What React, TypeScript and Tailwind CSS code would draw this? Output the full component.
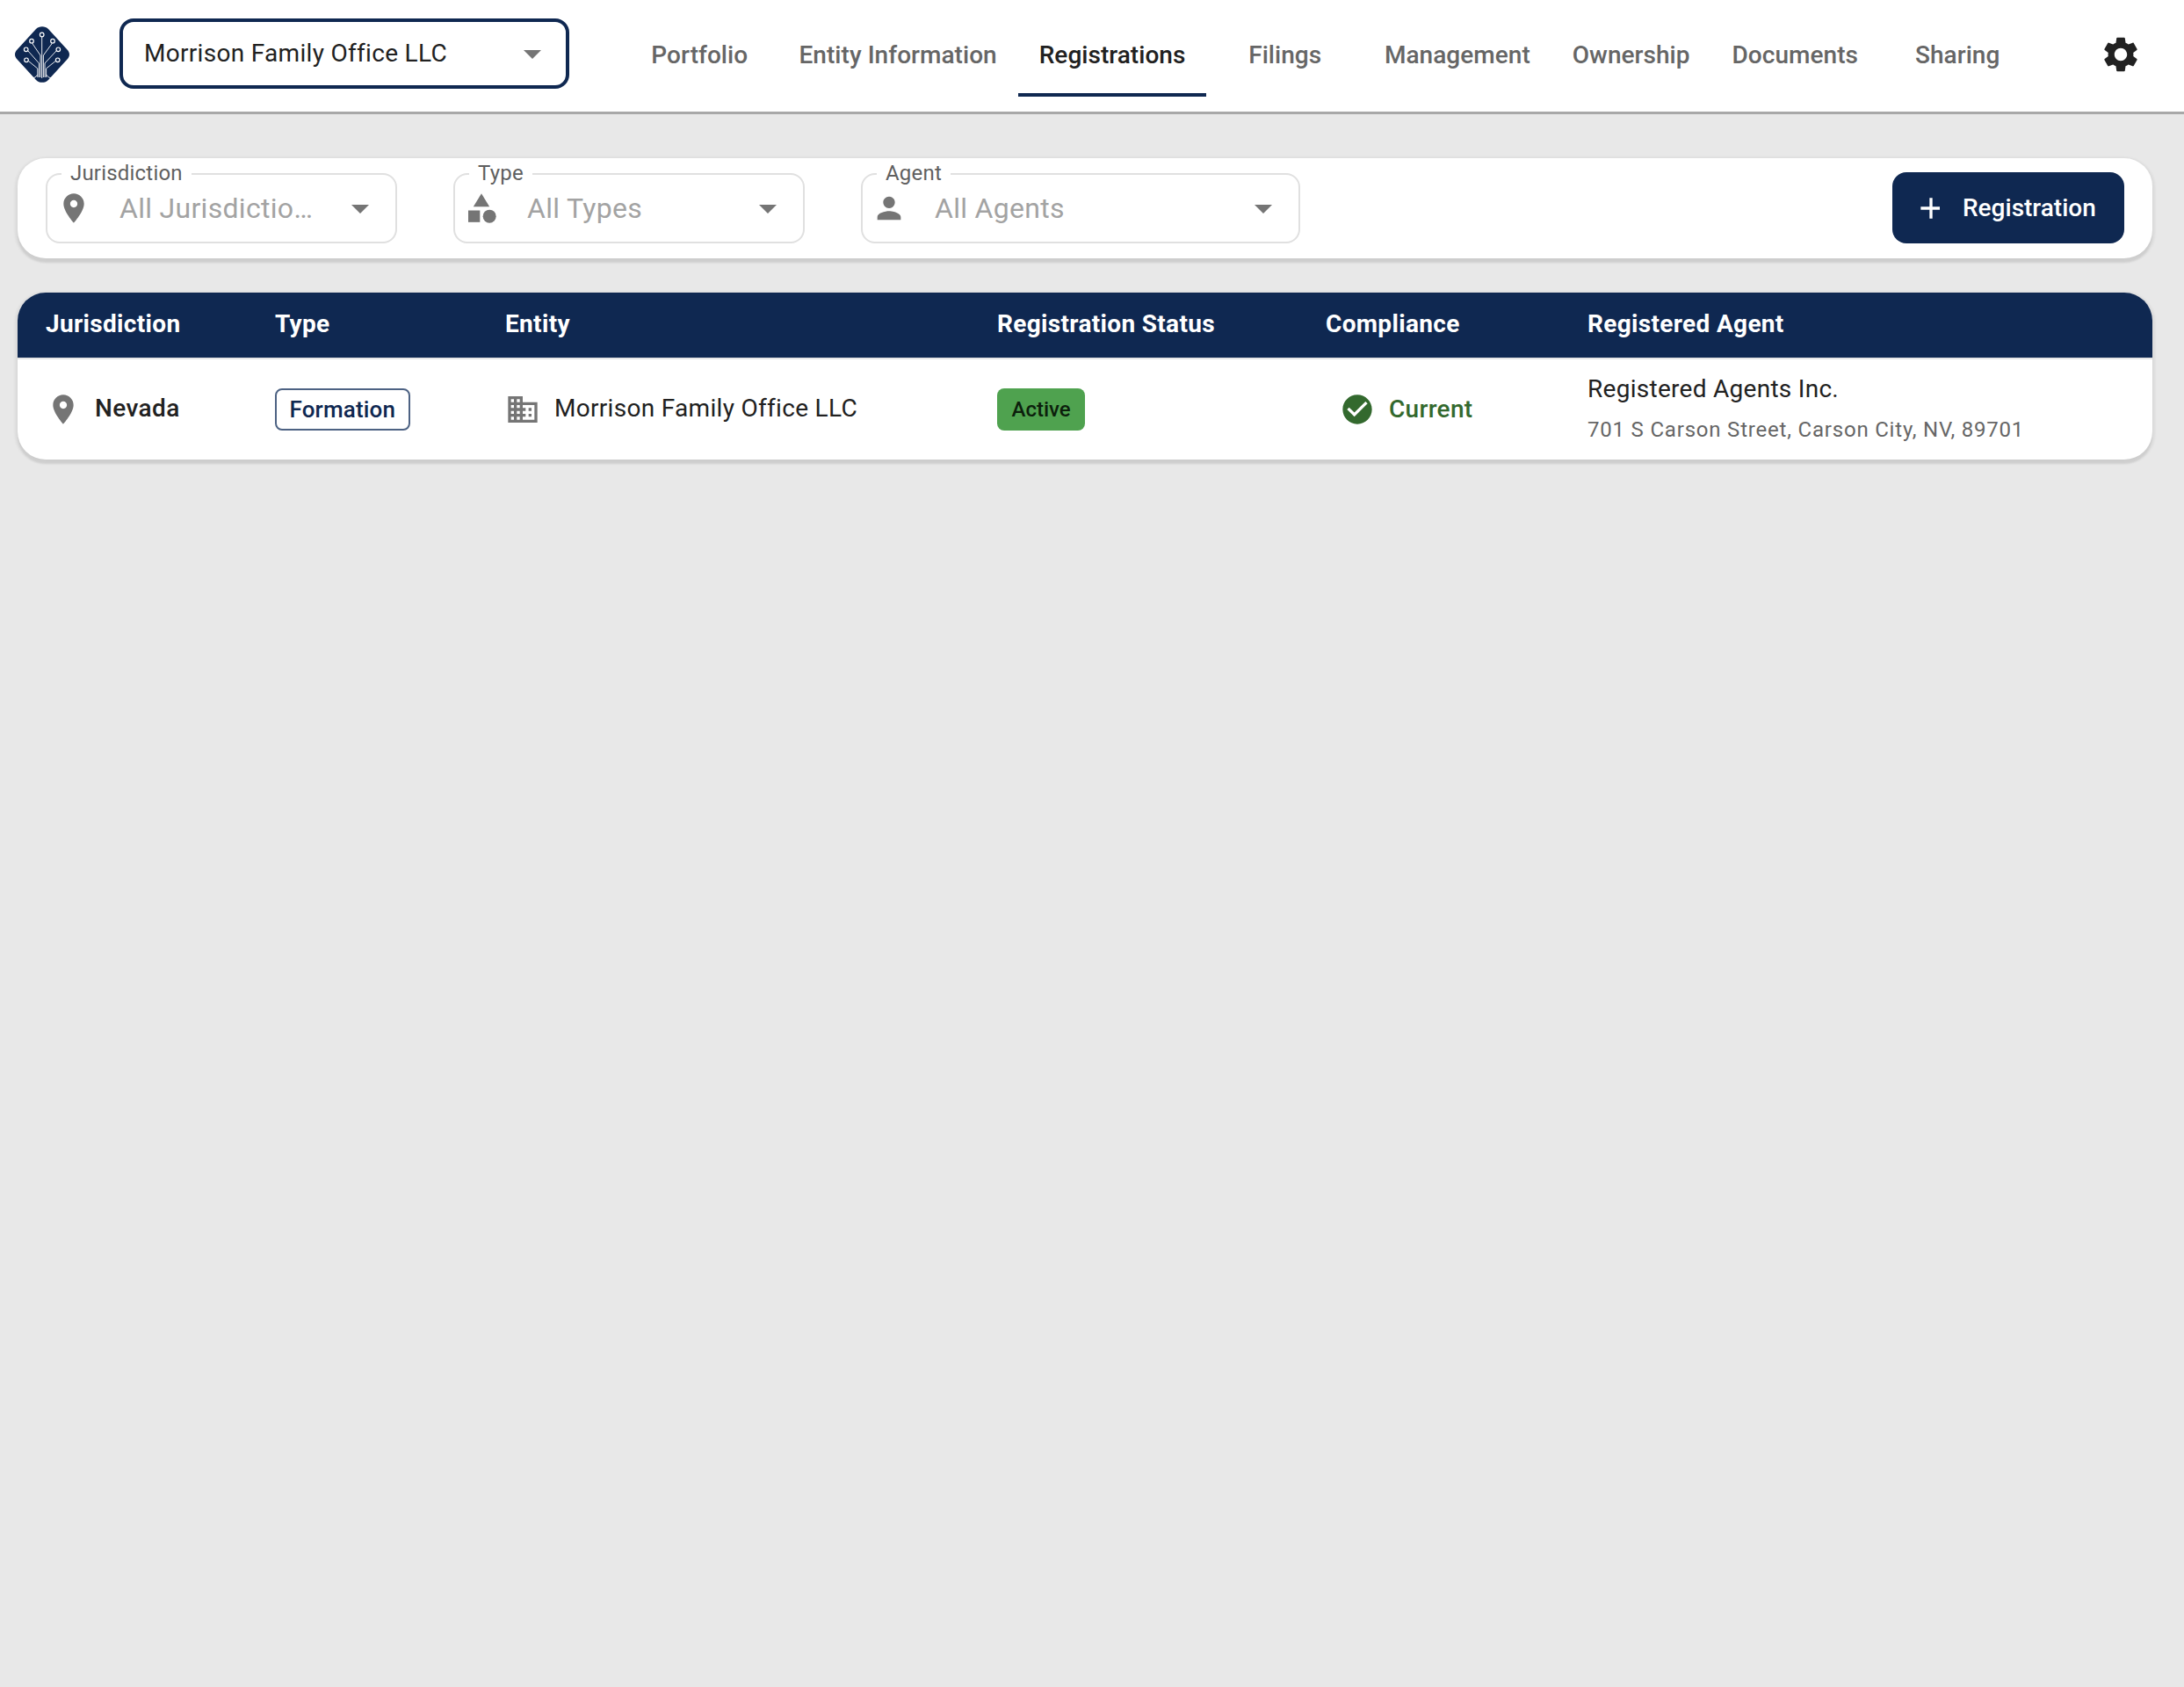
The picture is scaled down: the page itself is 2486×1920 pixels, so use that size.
const NAVY = "#0f2851";

function MuiIcon({ d, className, children }: { d?: string; className?: string; children?: React.ReactNode }) {
  return (
    <svg viewBox="0 0 24 24" fill="currentColor" className={className}>
      {d ? <path d={d} /> : null}
      {children}
    </svg>
  );
}

const PLACE = "M12 2C8.13 2 5 5.13 5 9c0 5.25 7 13 7 13s7-7.75 7-13c0-3.87-3.13-7-7-7zm0 9.5c-1.38 0-2.5-1.12-2.5-2.5s1.12-2.5 2.5-2.5 2.5 1.12 2.5 2.5-1.12 2.5-2.5 2.5z";
const PERSON = "M12 12c2.21 0 4-1.79 4-4s-1.79-4-4-4-4 1.79-4 4 1.79 4 4 4zm0 2c-2.67 0-8 1.34-8 4v2h16v-2c0-2.66-5.33-4-8-4z";
const ARROW = "M7 10l5 5 5-5z";
const PLUS = "M19 13h-6v6h-2v-6H5v-2h6V5h2v6h5v2z";
const GEAR = "M19.14 12.94c.04-.3.06-.61.06-.94 0-.32-.02-.64-.07-.94l2.03-1.58c.18-.14.23-.41.12-.61l-1.92-3.32c-.12-.22-.37-.29-.59-.22l-2.39.96c-.5-.38-1.03-.7-1.62-.94l-.36-2.54c-.04-.24-.24-.41-.48-.41h-3.84c-.24 0-.43.17-.47.41l-.36 2.54c-.59.24-1.13.57-1.62.94l-2.39-.96c-.22-.08-.47 0-.59.22L2.74 8.87c-.12.21-.08.47.12.61l2.03 1.58c-.05.3-.09.63-.09.94s.02.64.07.94l-2.03 1.58c-.18.14-.23.41-.12.61l1.92 3.32c.12.22.37.29.59.22l2.39-.96c.5.38 1.03.7 1.62.94l.36 2.54c.05.24.24.41.48.41h3.84c.24 0 .44-.17.47-.41l.36-2.54c.59-.24 1.13-.56 1.62-.94l2.39.96c.22.08.47 0 .59-.22l1.92-3.32c.12-.22.07-.47-.12-.61l-2.01-1.58zM12 15.6c-1.98 0-3.6-1.62-3.6-3.6s1.62-3.6 3.6-3.6 3.6 1.62 3.6 3.6-1.62 3.6-3.6 3.6z";
const BUSINESS = "M12 7V3H2v18h20V7H12zM6 19H4v-2h2v2zm0-4H4v-2h2v2zm0-4H4V9h2v2zm0-4H4V5h2v2zm4 12H8v-2h2v2zm0-4H8v-2h2v2zm0-4H8V9h2v2zm0-4H8V5h2v2zm10 12h-8v-2h2v-2h-2v-2h2v-2h-2V9h8v10zm-2-8h-2v2h2v-2zm0 4h-2v2h2v-2z";
const CHECK = "M12 2C6.48 2 2 6.48 2 12s4.48 10 10 10 10-4.48 10-10S17.52 2 12 2zm-2 15-5-5 1.41-1.41L10 14.17l7.59-7.59L19 8l-9 9z";

function Logo() {
  const nodes: [number, number][] = [
    [31.7, 9.5], [20, 16.7], [44, 16.7], [13.7, 26.3], [50.3, 26.3], [14, 38.3], [49.7, 38.3],
  ];
  return (
    <svg viewBox="0 0 64 64" className="w-[64px] h-[64px] shrink-0">
      <path
        d="M25 3 C28.5 -0.8 35.5 -0.8 39 3 L60.5 26.5 C63.8 30 63.8 34 60.5 37.5 L39 61 C35.5 64.8 28.5 64.8 25 61 L3.5 37.5 C0.2 34 0.2 30 3.5 26.5 Z"
        fill={NAVY}
      />
      <g stroke="#ffffff" strokeWidth="0.9" fill="none">
        <path d="M31.7 12 V59" />
        <path d="M30 58 V33 L20.5 19" />
        <path d="M33.4 58 V33 L43.5 19" />
        <path d="M28.4 58 V42 L16 28" />
        <path d="M35 58 V42 L48 28" />
        <path d="M26.8 58 L26.8 48 L16.5 39.5" />
        <path d="M36.6 58 L36.6 48 L47.2 39.5" />
        <path d="M26.8 55 L24 58 L20.5 59" />
        <path d="M36.6 55 L39.4 58 L43 59" />
        {nodes.map(([x, y]) => (
          <circle key={`${x}-${y}`} cx={x} cy={y} r="2.3" fill={NAVY} strokeWidth="1.2" />
        ))}
      </g>
    </svg>
  );
}

const TABS = ["Portfolio", "Entity Information", "Registrations", "Filings", "Management", "Ownership", "Documents", "Sharing"];

function Filter({
  label,
  value,
  widthClass,
  icon,
}: {
  label: string;
  value: string;
  widthClass: string;
  icon: React.ReactNode;
}) {
  return (
    <div className={`relative h-[80px] mt-[-1px] rounded-[16px] border-2 border-[#e0e0e0] flex items-center pl-[10px] pr-[16px] ${widthClass}`}>
      <span className="absolute left-[16px] top-[-16px] bg-white px-[10px] text-[24px] leading-[28px] text-[#5f5f5f] tracking-[0.2px]">
        {label}
      </span>
      <span className="w-[40px] h-[40px] shrink-0 text-[#757575]">{icon}</span>
      <span className="ml-[32px] flex-1 text-[32px] leading-[40px] text-[#a3a3a3] tracking-[0.3px] truncate whitespace-nowrap">{value}</span>
      <MuiIcon d={ARROW} className="w-[48px] h-[48px] shrink-0 text-[#757575]" />
    </div>
  );
}

export default function App() {
  return (
    <div className="min-h-screen bg-[#e8e8e8] text-[#212121]" style={{ fontFamily: "Roboto, 'Liberation Sans', sans-serif" }}>
      <header className="h-[130px] bg-white border-b-[3px] border-[#a8a8a8] flex items-center">
        <div className="ml-[16px] mt-[-4px]">
          <Logo />
        </div>
        <div className="ml-[56px] mt-[-6px] w-[512px] h-[80px] rounded-[16px] border-[4px] border-[#0f2851] flex items-center pl-[24px] pr-[14px]">
          <span className="flex-1 pt-[1px] text-[28px] leading-[36px] tracking-[0.3px] text-[#212121]">Morrison Family Office LLC</span>
          <MuiIcon d={ARROW} className="w-[48px] h-[48px] text-[#757575]" />
        </div>
        <nav className="ml-[59px] flex h-full">
          {TABS.map((t) => {
            const active = t === "Registrations";
            return (
              <div
                key={t}
                className={`min-w-[178.5px] px-[24px] h-[110px] flex items-center justify-center text-[28px] font-medium tracking-[0.04px] whitespace-nowrap border-b-[4px] ${
                  active ? "text-[#212121] border-[#0f2851]" : "text-[#666666] border-transparent"
                }`}
              >
                <span className="pt-[20px]">{t}</span>
              </div>
            );
          })}
        </nav>
        <MuiIcon d={GEAR} className="ml-[73px] mt-[-4px] w-[48px] h-[48px] text-[#212121]" />
      </header>

      <main className="px-[20px] pt-[50px] w-[2470px]">
        <section className="h-[114px] bg-white rounded-[32px] shadow-[0_2px_3px_3px_rgba(0,0,0,0.06),0_5px_2px_0_rgba(0,0,0,0.06)] flex items-center pl-[32px] pr-[32px]">
          <div className="flex gap-[64px]">
            <Filter label="Jurisdiction" value="All Jurisdictio…" widthClass="w-[400px]" icon={<MuiIcon d={PLACE} />} />
            <Filter
              label="Type"
              value="All Types"
              widthClass="w-[400px]"
              icon={
                <MuiIcon>
                  <path d="m12 2-5.5 9h11z" />
                  <circle cx="17.5" cy="17.5" r="4.5" />
                  <path d="M3 13.5h8v8H3z" />
                </MuiIcon>
              }
            />
            <Filter label="Agent" value="All Agents" widthClass="w-[500px]" icon={<MuiIcon d={PERSON} />} />
          </div>
          <button className="ml-auto mt-[-1px] w-[264px] h-[81px] rounded-[16px] bg-[#0f2851] text-white flex items-center pl-[24px]">
            <MuiIcon d={PLUS} className="w-[40px] h-[40px]" />
            <span className="ml-[16px] text-[28px] font-medium">Registration</span>
          </button>
        </section>

        <section className="mt-[39px] bg-white rounded-[32px] overflow-hidden shadow-[0_2px_3px_3px_rgba(0,0,0,0.06),0_5px_2px_0_rgba(0,0,0,0.06)]">
          <div className="h-[74px] pb-[3px] bg-[#0f2851] text-white text-[28px] font-bold tracking-[0.33px] grid grid-cols-[261px_262px_560px_374px_298px_1fr] items-center pl-[32px]">
            <span>Jurisdiction</span>
            <span>Type</span>
            <span>Entity</span>
            <span>Registration Status</span>
            <span>Compliance</span>
            <span>Registered Agent</span>
          </div>
          <div className="h-[116px] border-t-2 border-[#e6e6e6] grid grid-cols-[261px_262px_560px_374px_298px_1fr] items-center pl-[32px]">
            <div className="flex items-center">
              <MuiIcon d={PLACE} className="w-[40px] h-[40px] text-[#757575]" />
              <span className="ml-[16px] mt-[-2px] text-[28px] font-medium tracking-[0.4px] text-[#212121]">Nevada</span>
            </div>
            <div>
              <span className="inline-flex items-center h-[48px] px-[14.5px] rounded-[8px] border-2 border-[#4d6283] text-[#0f2851] text-[26px] font-medium tracking-[0.15px]">Formation</span>
            </div>
            <div className="flex items-center">
              <MuiIcon d={BUSINESS} className="w-[40px] h-[40px] text-[#757575]" />
              <span className="ml-[16px] mt-[-2px] text-[28px] tracking-[0.3px] text-[#212121]">Morrison Family Office LLC</span>
            </div>
            <div>
              <span className="inline-flex items-center h-[48px] px-[16.5px] rounded-[8px] bg-[#4fa24f] text-[#0c1f0c] text-[24px] font-medium">Active</span>
            </div>
            <div className="flex items-center pl-[16px]">
              <MuiIcon d={CHECK} className="w-[40px] h-[40px] text-[#33692e]" />
              <span className="ml-[16px] text-[28px] font-medium tracking-[0.3px] text-[#33692e]">Current</span>
            </div>
            <div className="flex flex-col pt-[1px]">
              <span className="text-[28px] leading-[44px] tracking-[0.28px] text-[#212121]">Registered Agents Inc.</span>
              <span className="text-[24px] leading-[48px] tracking-[0.8px] text-[#666666]">701 S Carson Street, Carson City, NV, 89701</span>
            </div>
          </div>
        </section>
      </main>
    </div>
  );
}
